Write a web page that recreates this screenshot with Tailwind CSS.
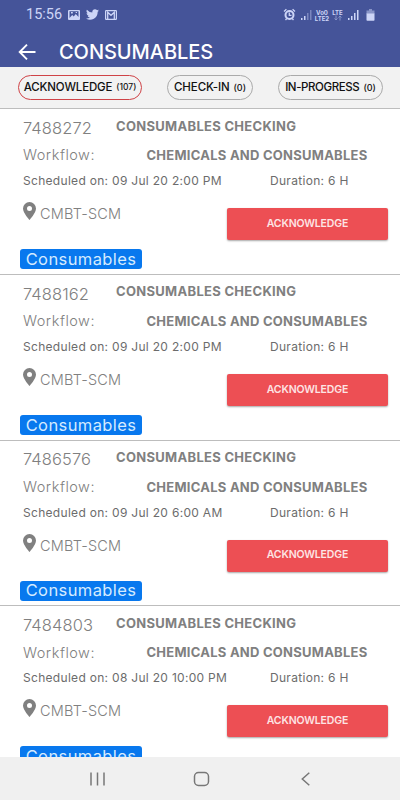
<!doctype html>
<html lang="en">
  <head>
    <meta charset="UTF-8" />
    <meta name="viewport" content="width=device-width, initial-scale=1.0" />
    <script src="https://cdn.jsdelivr.net/npm/@tailwindcss/browser@4"></script>
    <title>Consumables</title>
  </head>
  <body class="bg-white font-['Inter',sans-serif]">
    <div class="flex h-[800px] w-[400px] flex-col overflow-hidden whitespace-nowrap">
      <header class="h-[67px] shrink-0 bg-[#455499]">
        <!-- Status bar -->
        <div class="flex h-[29px] items-center pl-[26px] pr-[25px] text-[#cdd5f7]">
          <span class="w-[42px] pt-[2px] font-['Roboto',sans-serif] text-[14.5px] leading-none">15:56</span>
          <svg class="h-3 w-3" viewBox="0 0 12 12">
            <path fill="currentColor" fill-rule="evenodd" d="M1 1h10a1 1 0 0 1 1 1v8a1 1 0 0 1-1 1H1a1 1 0 0 1-1-1V2a1 1 0 0 1 1-1zM1.5 2.3V9l2.7-3 1.5 1.4L7.8 5l2.7 3V2.3zM3 3h1.8v1.6H3zM7.7 3H9v1H7.7z" />
          </svg>
          <svg class="ml-[6px] h-[13px] w-[13px]" viewBox="0 0 24 24">
            <path fill="currentColor" d="M24 4.6a10 10 0 0 1-2.8.8 5 5 0 0 0 2.1-2.7 10 10 0 0 1-3.1 1.2 4.9 4.9 0 0 0-8.4 4.5A14 14 0 0 1 1.7 3.2a4.9 4.9 0 0 0 1.5 6.5 4.9 4.9 0 0 1-2.2-.6 4.9 4.9 0 0 0 3.9 4.9 5 5 0 0 1-2.2.1 4.9 4.9 0 0 0 4.6 3.4A9.9 9.9 0 0 1 0 19.5a14 14 0 0 0 21.500-12.400A10 10 0 0 0 24 4.600z" />
          </svg>
          <svg class="ml-[6px] h-3 w-3" viewBox="0 0 12 12" fill="none" stroke="currentColor">
            <rect x=".6" y="1.6" width="10.8" height="8.8" rx=".6" stroke-width="1.2" />
            <path d="M2.7 10V3.3L6 6.300l3.300-3V10" stroke-width="1.300" />
          </svg>
          <svg class="ml-auto h-[13px] w-[13px]" viewBox="0 0 13 13" fill="none" stroke="currentColor">
            <circle cx="6.5" cy="7" r="4" stroke-width="2" />
            <path d="M6.300 4.500v2.800h2.200M1 3.400L3.400 1.300M12 3.400L9.600 1.300M2.500 12l1.200-1.400M10.500 12l-1.200-1.400" stroke-width="1.300" />
          </svg>
          <svg class="ml-[5px] h-[11px] w-[11px]" viewBox="0 0 11 11" fill="currentColor">
            <path d="M0 9h1.500v2H0zM3 7h1.500v4H3z" />
            <path opacity=".4" d="M6 4h1.500v7H6zM9 1h1.500v10H9z" />
          </svg>
          <div class="ml-[2px] flex w-[16px] flex-col items-center text-[6px] font-bold leading-[7px]">
            <span class="h-[6px]">Vo0</span>
            <span class="h-[6px]">LTE2</span>
          </div>
          <div class="ml-[1px] flex w-[13px] flex-col items-center text-[6px] font-bold leading-[7px]">
            <span class="h-[6px]">LTE</span>
            <svg class="h-[6px] w-[8px] opacity-50" viewBox="0 0 8 6" fill="none" stroke="currentColor">
              <path d="M2 .5v4.500M.5 3.500L2 5l1.500-1.500M6 5.500V1M4.500 2.500L6 1l1.500 1.500" />
            </svg>
          </div>
          <svg class="ml-[4px] h-[11px] w-[11px]" viewBox="0 0 11 11" fill="currentColor">
            <path d="M0 9h1.500v2H0zM3 7h1.500v4H3zM6 4h1.500v7H6zM9 1h1.500v10H9z" />
          </svg>
          <svg class="ml-[7px] h-3 w-[9px]" viewBox="0 0 9 12" fill="currentColor">
            <path opacity=".5" d="M3 0h3v1.500h2.500V5h-8V1.500H3z" />
            <path d="M.5 4.500h8V11a.7.7 0 0 1-.7.7H1.200a.7.7 0 0 1-.7-.7z" />
          </svg>
        </div>
        <!-- App bar -->
        <div class="flex h-[38px] items-center pl-[18px] pt-[7px] text-white">
          <svg class="h-[18px] w-[18px]" viewBox="0 0 18 18" fill="none" stroke="currentColor" stroke-width="1.900">
            <path d="M17.500 9H2M9 1.700L1.700 9 9 16.300" />
          </svg>
          <h1 class="ml-[23px] text-[20px] font-medium leading-none tracking-[-0.05px]">CONSUMABLES</h1>
        </div>
      </header>

      <nav class="flex h-[41px] shrink-0 items-center bg-[#f2f2f2] pl-[18px] text-[12px] font-medium leading-none text-[#111]">
        <button class="flex h-[25px] w-[124px] items-center justify-center gap-[4px] rounded-full border-[1.5px] border-[#cf4347]">
          <span class="text-[11.5px] tracking-[-0.15px]">ACKNOWLEDGE</span><span class="text-[8.5px]">(107)</span>
        </button>
        <button class="ml-[25px] flex h-[25px] w-[86px] items-center justify-center gap-[4px] rounded-full border border-[#aaa]">
          <span class="text-[11.5px] tracking-[-0.1px]">CHECK-IN</span><span class="text-[9px]">(0)</span>
        </button>
        <button class="ml-[25px] flex h-[25px] w-[105px] items-center justify-center gap-[4px] rounded-full border border-[#aaa]">
          <span class="text-[11.5px] tracking-[-0.4px]">IN-PROGRESS</span><span class="text-[9px]">(0)</span>
        </button>
      </nav>

      <main id="taskList" class="h-[649px] shrink-0 overflow-hidden bg-white"></main>

      <!-- Navigation bar -->
      <footer class="flex h-[43px] shrink-0 items-center bg-[#f0f0f0] pl-[90px] text-[#777]">
        <svg class="h-[14px] w-[15px]" viewBox="0 0 15 14" fill="none" stroke="currentColor" stroke-width="1.500">
          <path d="M1 .5v13M7.500 .5v13M14 .5v13" />
        </svg>
        <svg class="ml-[88px] h-[16px] w-[17px]" viewBox="0 0 17 16" fill="none" stroke="currentColor" stroke-width="1.500">
          <rect x="1.5" y="1.5" width="14" height="13" rx="4" />
        </svg>
        <svg class="ml-[91px] h-[14px] w-[9px]" viewBox="0 0 9 14" fill="none" stroke="currentColor" stroke-width="1.500">
          <path d="M8.300 .8L1.300 7l7 6.200" />
        </svg>
      </footer>
    </div>
  </body>
  <script>
    const tasks = [
      { id: "7488272", scheduled: "09 Jul 20 2:00 PM" },
      { id: "7488162", scheduled: "09 Jul 20 2:00 PM" },
      { id: "7486576", scheduled: "09 Jul 20 6:00 AM" },
      { id: "7484803", scheduled: "08 Jul 20 10:00 PM" },
    ];

    document.getElementById("taskList").innerHTML = tasks
      .map(
        (task) => `
        <article class="h-[165.8px] border-t-[1.5px] border-[#bdbdbd] text-[#808080]">
          <div class="flex h-[34px] items-center pl-[23px]">
            <span class="w-[93px] pt-[4px] text-[16.5px] font-light leading-none tracking-[0.1px]">${task.id}</span>
            <span class="text-[13px] font-bold leading-none tracking-[0.3px]">CONSUMABLES CHECKING</span>
          </div>
          <div class="flex h-[25px] items-center pl-[23px]">
            <span class="w-[123.5px] text-[14.5px] font-light leading-none tracking-[0.5px]">Workflow:</span>
            <span class="text-[13px] font-bold leading-none tracking-[0.25px]">CHEMICALS AND CONSUMABLES</span>
          </div>
          <div class="flex h-[24px] items-center pl-[23px] pt-[2px] text-[12px] leading-none tracking-[0.3px] text-[#6c6c6c]">
            <span class="w-[247px]">Scheduled on: ${task.scheduled}</span>
            <span>Duration: 6 H</span>
          </div>
          <div class="flex h-[57px] items-start pl-[23px]">
            <svg class="mt-[10px] h-[18px] w-[13px]" viewBox="0 0 13 18">
              <path fill="#808080" fill-rule="evenodd" d="M6.500 0A6.500 6.500 0 0 1 13 6.500C13 11 6.500 18 6.500 18S0 11 0 6.500A6.500 6.500 0 0 1 6.500 0zm0 4a2.500 2.500 0 1 0 0 5 2.500 2.500 0 0 0 0-5z" />
            </svg>
            <span class="ml-[4px] mt-[15px] w-[187px] text-[14.5px] font-light leading-none tracking-[0.2px]">CMBT-SCM</span>
            <button class="mt-[16px] h-[32px] w-[161px] rounded-[2px] bg-[#ed4f54] text-[10.5px] font-semibold leading-none tracking-[-0.15px] text-[#fde4e4] shadow-[0_1px_2px_rgba(0,0,0,0.35)]">ACKNOWLEDGE</button>
          </div>
          <div class="ml-[20px] flex h-[20px] w-[122px] items-center justify-center rounded-[3px] bg-[#0878ee] text-[16.5px] leading-none tracking-[0.4px] text-[#d5ebff]">Consumables</div>
        </article>`
      )
      .join("");
  </script>
</html>
